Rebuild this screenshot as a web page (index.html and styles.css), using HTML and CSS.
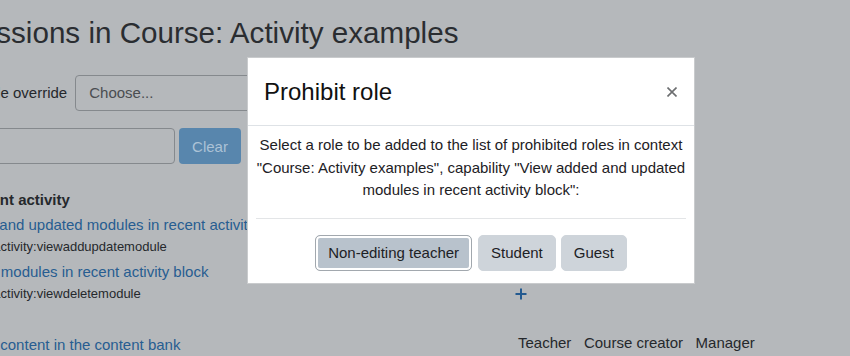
FILE: index.html
```html
<!DOCTYPE html>
<html lang="en">
<head>
    <meta charset="UTF-8">
    <meta name="viewport" content="width=device-width, initial-scale=1.0">
    <title>Permissions in Course: Activity examples</title>
    <link rel="stylesheet" href="styles.css">
</head>
<body>
    <!-- Page behind the dialog -->
    <div class="page">
        <h2 class="page-title">Permissions in Course: Activity examples</h2>

        <div class="override-row">
            <label for="override">Role override</label>
            <div class="select-box" id="override">Choose...</div>
        </div>

        <div class="filter-row">
            <div class="filter-input"></div>
            <button class="btn-clear" disabled>Clear</button>
        </div>

        <div class="section-name">Recent activity</div>

        <div class="cap-row">
            <div class="cap-cell cap-add">
                <a class="cap-link">View added and updated modules in recent activity block</a>
                <div class="cap-name">block/recent_activity:viewaddupdatemodule</div>
            </div>
            <div class="role-cell"></div>
        </div>

        <div class="cap-row">
            <div class="cap-cell cap-delete">
                <a class="cap-link">View deleted modules in recent activity block</a>
                <div class="cap-name">block/recent_activity:viewdeletemodule</div>
            </div>
            <div class="role-cell role-add">
                <svg width="12" height="12" viewBox="0 0 12 12">
                    <path d="M6 0.5V11.5M0.5 6H11.5" stroke="#235a90" stroke-width="2" fill="none"/>
                </svg>
            </div>
        </div>

        <div class="cap-row cap-last">
            <div class="cap-cell cap-bank">
                <a class="cap-link">View unlisted content in the content bank</a>
            </div>
            <div class="role-cell role-list">
                <span>Teacher</span>
                <span>Course creator</span>
                <span>Manager</span>
            </div>
        </div>
    </div>

    <!-- Prohibit role dialog -->
    <div class="modal">
        <div class="modal-header">
            <h5 class="modal-title">Prohibit role</h5>
            <span class="modal-close">
                <svg width="10" height="10" viewBox="0 0 10 10">
                    <path d="M0.5 0.5L9.5 9.5M9.5 0.5L0.5 9.5" stroke="#6c6e70" stroke-width="1.6" fill="none"/>
                </svg>
            </span>
        </div>
        <div class="modal-body">
            <p>Select a role to be added to the list of prohibited roles in context<br>
            "Course: Activity examples", capability "View added and updated<br>
            modules in recent activity block":</p>
            <hr>
            <div class="role-buttons">
                <button class="btn btn-focus">Non-editing teacher</button>
                <button class="btn">Student</button>
                <button class="btn">Guest</button>
            </div>
        </div>
    </div>
</body>
</html>
```
FILE: styles.css
```css
/* Page under the backdrop */
html, body {
    overflow: hidden;
}

body {
    margin: 0;
    background: #b5b8bb;
    color: #25282c;
    font-family: "Liberation Sans", Arial, sans-serif;
    font-size: 15px;
    line-height: 22px;
    height: 356px;
    position: relative;
}

.page {
    padding-top: 15px;
    white-space: nowrap;
}

.page-title {
    margin: 0 0 0 -81px;
    font-size: 29.6px;
    font-weight: 400;
    line-height: 36px;
    color: #2a2d31;
}

.override-row {
    display: flex;
    align-items: center;
    gap: 8px;
    margin-top: 24px;
    margin-left: -22px;
}

.select-box {
    box-sizing: border-box;
    width: 330px;
    height: 36px;
    padding: 0 13px;
    border: 1px solid #85898d;
    border-radius: 4px;
    line-height: 34px;
    color: #4a4d51;
}

.filter-row {
    display: flex;
    gap: 4px;
    margin-top: 17px;
    margin-left: -100px;
}

.filter-input {
    box-sizing: border-box;
    width: 275px;
    height: 36px;
    border: 1px solid #85898d;
    border-radius: 4px;
}

.btn-clear {
    width: 62px;
    height: 36px;
    border: none;
    border-radius: 4px;
    background: #5886ad;
    color: #acc2d6;
    font-family: inherit;
    font-size: 15px;
}

.section-name {
    margin-top: 25px;
    margin-left: -36px;
    font-weight: bold;
}

.cap-row {
    display: grid;
    grid-template-columns: 514px 1fr;
    padding-top: 3px;
}

.cap-link {
    display: block;
    color: #275d91;
}

.cap-name {
    font-size: 13px;
    color: #25282c;
}

.cap-add .cap-link { margin-left: -83px; }
.cap-add .cap-name { margin-left: -84px; }
.cap-delete .cap-link { margin-left: -89px; }
.cap-delete .cap-name { margin-left: -84px; }

.cap-last {
    padding-top: 29px;
}

.cap-bank .cap-link { margin-left: -92px; }

.role-add {
    display: flex;
    align-items: flex-end;
    padding-bottom: 5px;
    padding-left: 1px;
}

.role-list {
    display: flex;
    gap: 12.5px;
    margin-top: -2px;
    padding-left: 4px;
}

/* Dialog */
.modal {
    position: absolute;
    top: 57px;
    left: 247px;
    width: 448px;
    box-sizing: border-box;
    background: #fff;
    border: 1px solid #c9cbcd;
    color: #1d2125;
}

.modal-header {
    display: flex;
    justify-content: space-between;
    align-items: center;
    height: 67px;
    padding: 0 17px 0 16px;
    border-bottom: 1px solid #dee2e6;
}

.modal-title {
    margin: 0;
    font-size: 24px;
    font-weight: 400;
    line-height: 28px;
    color: #111;
}

.modal-close {
    display: flex;
}

.modal-body {
    padding: 8px 6px 12px;
    text-align: center;
}

.modal-body p {
    margin: 0 0 16px;
    line-height: 22.5px;
}

.modal-body hr {
    margin: 0 2px;
    border: none;
    border-top: 1px solid #e3e5e7;
}

.role-buttons {
    display: flex;
    justify-content: center;
    gap: 5px;
    margin-top: 16px;
}

.btn {
    padding: 6px 12px;
    border: 1px solid #ced4da;
    border-radius: 5px;
    background: #ced4da;
    color: #1d2125;
    font-family: inherit;
    font-size: 15px;
    line-height: 22px;
}

.btn-focus {
    background: #b8c2cc;
    border-color: #a2a8ae;
    box-shadow: inset 0 0 0 2px #fff;
    margin-right: 1px;
}
```
